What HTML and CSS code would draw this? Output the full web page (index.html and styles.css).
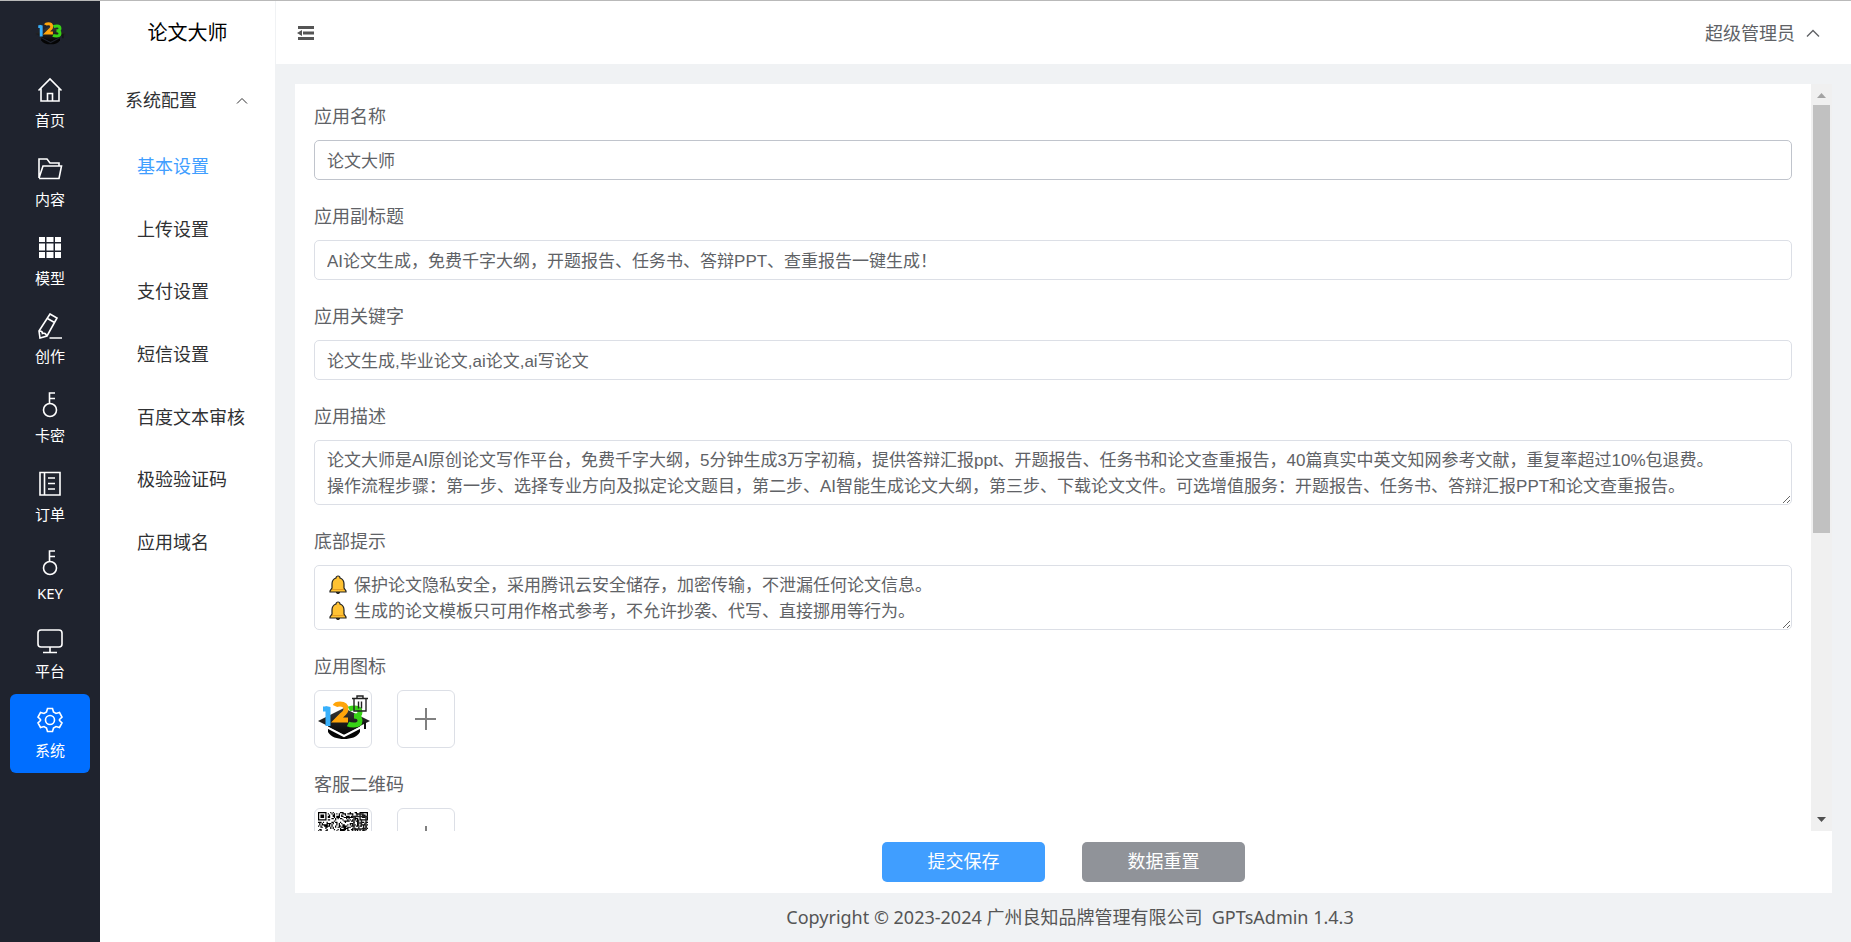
FILE: index.html
```html
<!DOCTYPE html>
<html lang="zh-CN">
<head>
<meta charset="utf-8">
<title>论文大师</title>
<link rel="stylesheet" href="styles.css">
</head>
<body>
<svg class="defs" aria-hidden="true">
  <defs>
    <linearGradient id="capFill" x1="0" y1="0" x2="0" y2="1"><stop offset="0" stop-color="#3a3a3a"/><stop offset="1" stop-color="#050505"/></linearGradient>
    <symbol id="cap" viewBox="0 0 54 46">
      <path class="cap-base" d="M12 27h32v9c-3 5-9 7-16 7s-13-2-16-7z"/>
      <path class="cap-edge" d="M3 27 28 40 53 27" />
      <path d="M28 12 54 25 28 38 2 25z" fill="url(#capFill)" stroke="none"/>
      <path d="M49 26v7" stroke="#111" stroke-width="2"/>
      <g fill="none" stroke-width="5">
        <path d="M7 13h2q2 0 3-2v19" stroke="#38b0fb"/>
        <path d="M19 10q1-2 5-2 6 0 6 5 0 3-4 6l-5 5h11" stroke="#ffa50a"/>
        <path d="M33 13q2-1 6-1 5 0 5 4t-6 4q6 0 6 4.500t-6 4.500q-4 0-6-1" stroke="#38d316"/>
      </g>
    </symbol>
    <symbol id="trash" viewBox="0 0 16 17"><path d="M0 3.500h16M5 3V1h6v2M2 4v12h12V4M6.500 6.500v7M9.500 6.500v7" fill="none" stroke="#222" stroke-width="1.400"/></symbol>
    <symbol id="plus" viewBox="0 0 22 22"><path d="M11 0v22M0 11h21" stroke="#808080" stroke-width="2"/></symbol>
    <symbol id="key" viewBox="0 0 26 26"><g fill="none" stroke="currentColor" stroke-width="1.600"><circle cx="13" cy="18" r="6.500"/><path d="M12.500 11.500V1H18M12.500 6.500H18"/></g></symbol>
    <symbol id="bell" viewBox="0 0 20 20"><path d="M10 1c1 0 2 1 2 2 3 1 4 3 4 6v4l2 3v1H2v-1l2-3V9c0-3 1-5 4-6 0-1 1-2 2-2z" fill="#ffc233" stroke="#222" stroke-width="1.200"/><path d="M8 17.500q2 2.500 4 0z" fill="#e08a1c" stroke="#222"/><path d="M4 14.500h12" stroke="#e39a20"/></symbol>
  </defs>
</svg>
<div class="app">
  <nav class="rail" aria-label="主导航">
    <svg class="rail-logo"><use href="#cap"/></svg>
    <div class="rail-list">
      <a class="rail-item" href="#"><svg viewBox="0 0 26 26"><path d="M1.500 13.500 13 2l11.500 11.500M4 11.500V24h18V11.500M10.500 24v-7.500h5V24"/></svg><span>首页</span></a>
      <a class="rail-item" href="#"><svg viewBox="0 0 26 26"><path d="M2 22V3h8l3 4h9v3M2 22 6 10h18.500L22 22.500H2"/></svg><span>内容</span></a>
      <a class="rail-item" href="#"><svg class="solid" viewBox="0 0 26 26"><path d="M2 2h6v5H2zM9.500 2h7v5h-7zM18 2h6v5h-6zM2 8.500h6v7H2zM9.500 8.500h7v7h-7zM18 8.500h6v7h-6zM2 17h6v6H2zM9.500 17h7v6h-7zM18 17h6v6h-6z"/></svg><span>模型</span></a>
      <a class="rail-item" href="#"><svg viewBox="0 0 26 26"><path d="M13 1l7 4-10 18-7 2-1-7zM10.500 5.500l7 4M2.500 18q3 0 3 2.500 3-1 4 2M12.500 25H25"/></svg><span>创作</span></a>
      <a class="rail-item" href="#"><svg><use href="#key"/></svg><span>卡密</span></a>
      <a class="rail-item" href="#"><svg viewBox="0 0 26 26"><path d="M3 1.500h20V24H3zM7.500 1.500V24M11 7h7M11 12.500h7M11 18h7"/></svg><span>订单</span></a>
      <a class="rail-item" href="#"><svg><use href="#key"/></svg><span>KEY</span></a>
      <a class="rail-item" href="#"><svg viewBox="0 0 26 26"><rect x="1" y="2" width="24" height="17" rx="3"/><path d="M13 19v5.500M6 24.500h14"/></svg><span>平台</span></a>
      <a class="rail-item active" href="#" aria-current="page"><svg viewBox="0 0 26 26"><path d="M10.500 1.500h5l1 3.500 2.500 1.500 3.500-1 2.500 4.500-2.500 2.500v1l2.500 2.500-2.500 4.500-3.500-1-2.500 1.500-1 3.500h-5l-1-3.500-2.500-1.500-3.500 1L1 16l2.500-2.500v-1L1 10l2.500-4.500 3.500 1L9.500 5z"/><circle cx="13" cy="13" r="4.500"/></svg><span>系统</span></a>
    </div>
  </nav>

  <aside class="side">
    <h1 class="side-title">论文大师</h1>
    <button class="side-group" type="button" aria-expanded="true"><span>系统配置</span><svg class="chev-small" viewBox="0 0 12 7"><path d="M1 6.500l5-5 5 5"/></svg></button>
    <div class="side-list">
      <a class="active" href="#">基本设置</a>
      <a href="#">上传设置</a>
      <a href="#">支付设置</a>
      <a href="#">短信设置</a>
      <a href="#">百度文本审核</a>
      <a href="#">极验验证码</a>
      <a href="#">应用域名</a>
    </div>
  </aside>

  <div class="main">
    <header class="top">
      <button class="fold" type="button" aria-label="收起菜单"><svg viewBox="0 0 18 16"><path d="M1 1h16v3H1zM6 6.500h11v3H6zM1 12h16v3H1zM0 8l5-3v6z"/></svg></button>
      <button class="user" type="button"><span>超级管理员</span><svg viewBox="0 0 14 8"><path d="M1 7.500l6-6 6 6"/></svg></button>
    </header>

    <main class="body">
      <form class="panel">
        <div class="scroll">
          <div class="fields">
            <div class="field"><label for="name">应用名称</label><input id="name" class="hover" type="text" value="论文大师"></div>
            <div class="field"><label for="sub">应用副标题</label><input id="sub" type="text" value="AI论文生成，免费千字大纲，开题报告、任务书、答辩PPT、查重报告一键生成！"></div>
            <div class="field"><label for="kw">应用关键字</label><input id="kw" type="text" value="论文生成,毕业论文,ai论文,ai写论文"></div>
            <div class="field"><label for="desc">应用描述</label><textarea id="desc" rows="2">论文大师是AI原创论文写作平台，免费千字大纲，5分钟生成3万字初稿，提供答辩汇报ppt、开题报告、任务书和论文查重报告，40篇真实中英文知网参考文献，重复率超过10%包退费。
操作流程步骤：第一步、选择专业方向及拟定论文题目，第二步、AI智能生成论文大纲，第三步、下载论文文件。可选增值服务：开题报告、任务书、答辩汇报PPT和论文查重报告。</textarea></div>
            <div class="field"><label for="tips">底部提示</label>
              <div class="tips"><textarea id="tips" rows="2">保护论文隐私安全，采用腾讯云安全储存，加密传输，不泄漏任何论文信息。
生成的论文模板只可用作格式参考，不允许抄袭、代写、直接挪用等行为。</textarea>
                <div class="bells"><svg><use href="#bell"/></svg><svg><use href="#bell"/></svg></div></div>
            </div>
            <div class="field"><span class="label">应用图标</span>
              <div class="tiles">
                <div class="tile"><svg class="cap"><use href="#cap"/></svg><button class="del" type="button" aria-label="删除"><svg><use href="#trash"/></svg></button></div>
                <button class="tile add" type="button" aria-label="添加"><svg><use href="#plus"/></svg></button>
              </div>
            </div>
            <div class="field"><span class="label">客服二维码</span>
              <div class="tiles">
                <div class="tile"><svg class="qr" id="qr" viewBox="0 0 41 41"></svg><button class="del" type="button" aria-label="删除"><svg><use href="#trash"/></svg></button></div>
                <button class="tile add" type="button" aria-label="添加"><svg><use href="#plus"/></svg></button>
              </div>
            </div>
          </div>
          <div class="bar" aria-hidden="true">
            <svg viewBox="0 0 9 5"><path d="M0 5 4.500 0 9 5z" fill="#a3a3a3"/></svg>
            <div class="track"><div class="thumb"></div></div>
            <svg viewBox="0 0 9 5"><path d="M0 0h9L4.500 5z" fill="#505050"/></svg>
          </div>
        </div>
        <div class="actions">
          <button class="btn primary" type="button">提交保存</button>
          <button class="btn" type="reset">数据重置</button>
        </div>
      </form>
    </main>
    <footer class="foot">Copyright © 2023-2024 广州良知品牌管理有限公司&nbsp; GPTsAdmin 1.4.3</footer>
  </div>
</div>
<script src="qr.js"></script>
</body>
</html>
```
FILE: styles.css
```css
* { box-sizing: border-box; }
body {
  margin: 0;
  font-family: "Noto Sans", "Noto Sans CJK SC", sans-serif;
  font-size: 18px;
  line-height: 26px;
  color: #606266;
}
a { color: inherit; text-decoration: none; }
button, input, textarea { font: inherit; color: inherit; }
button { padding: 0; border: 0; background: none; }
svg { display: block; fill: none; stroke: currentColor; }
.defs { position: absolute; width: 0; height: 0; }

.app { display: flex; height: 100vh; border-top: 1px solid #b9b9b9; background: #f0f2f4; overflow: hidden; }

.cap-base { fill: #050505; stroke: none; }
.cap-edge { fill: none; stroke: var(--cap-edge); stroke-width: 2; }

.rail { --cap-edge: #1f232e; flex: none; width: 100px; padding: 0 10px; background: #1f232e; color: #fff; }
.rail-logo { width: 34px; height: 27px; margin: 18px auto; }
.rail-list { display: grid; grid-auto-rows: 1fr; min-height: 709px; }
.rail-item { display: flex; flex-direction: column; align-items: center; gap: 5px; padding-top: 13px; border-radius: 6px; font-size: 15px; line-height: 24px; }
.rail-item.active { background: #006eff; }
.rail-item svg { width: 26px; height: 26px; stroke-width: 1.6; }
.rail-item .solid { fill: #fff; stroke: none; }

.side { flex: none; width: 176px; background: #fff; border-right: 1px solid #f0f2f4; color: #303133; }
.side-title { margin: 0; font-size: 20px; font-weight: 400; line-height: 64px; text-align: center; color: #000; }
.side-group { display: flex; align-items: center; justify-content: space-between; width: 100%; height: 70px; padding: 0 27px 0 25px; }
.chev-small { width: 12px; height: 7px; }
.side-list { display: grid; grid-auto-rows: 1fr; min-height: 438px; }
.side-list a { display: flex; align-items: center; padding-left: 37px; }
.side-list .active { color: #409eff; }

.main { flex: 1; min-width: 0; display: flex; flex-direction: column; }
.top { flex: none; height: 63px; display: flex; align-items: center; justify-content: space-between; padding: 0 31px 0 21px; background: #fff; }
.fold svg { width: 18px; height: 16px; fill: #555; stroke: none; }
.user { display: flex; align-items: center; gap: 11px; }
.user svg { width: 14px; height: 8px; stroke-width: 1.4; }

.body { flex: 1; min-height: 0; padding: 20px 19px 0; }
.panel { height: 100%; display: flex; flex-direction: column; background: #fff; }
.scroll { flex: 1; min-height: 0; display: flex; overflow: hidden; }
.fields { --cap-edge: #fff; flex: 1; min-width: 0; padding: 19px 19px; display: flex; flex-direction: column; gap: 23px; overflow: hidden; }
.field { flex: none; display: flex; flex-direction: column; gap: 11px; }
input, textarea { display: block; width: 100%; margin: 0; border: 1px solid #dcdfe6; border-radius: 5px; background: #fff; outline: 0; font-family: "Liberation Sans", "Noto Sans CJK SC", sans-serif; font-size: 17px; }
input { height: 40px; padding: 0 12px 2px; }
input.hover { border-color: #c0c4cc; }
textarea { height: 65px; padding: 7px 12px 4px; line-height: 26px; resize: vertical; overflow: hidden; }
.tips { position: relative; }
.tips textarea { padding-left: 39px; }
.bells { position: absolute; left: 14px; top: 10px; display: grid; gap: 6px; }
.bells svg { width: 20px; height: 20px; stroke: none; }

.tiles { display: flex; gap: 25px; }
.tile { position: relative; width: 58px; height: 58px; border: 1px solid #dcdfe6; border-radius: 6px; display: grid; place-items: center; }
.cap { width: 54px; height: 46px; }
.qr { width: 50px; height: 50px; fill: #000; stroke: none; }
.add svg { width: 22px; height: 22px; }
.del { position: absolute; right: 3px; top: 4px; }
.del svg { width: 16px; height: 17px; }

.bar { flex: none; width: 21px; padding: 9px 0; background: #f0f0f0; display: flex; flex-direction: column; align-items: center; gap: 7px; }
.bar svg { flex: none; width: 9px; height: 5px; stroke: none; }
.track { flex: 1; width: 17px; }
.thumb { height: 60.7%; background: #c1c1c1; }

.actions { flex: none; display: flex; justify-content: center; gap: 37px; padding: 11px 0; }
.btn { width: 163px; height: 40px; padding-bottom: 2px; border-radius: 5px; background: #909399; color: #fff; }
.btn.primary { background: #409eff; }
.foot { flex: none; height: 49px; padding-left: 13px; line-height: 49px; text-align: center; color: #555; }
```
FILE: qr.js
```js
// Draws the service QR code: three finder squares and a data field.
(function () {
  var size = 41, seed = 7, d = "";
  function finder(x, y, fx, fy) {
    var dx = Math.abs(x - fx), dy = Math.abs(y - fy), m = Math.max(dx, dy);
    return m > 4 ? -1 : (m === 3 || m < 2 ? 1 : 0);
  }
  for (var y = 0; y < size; y++) {
    for (var x = 0; x < size; x++) {
      seed = (seed * 1103515245 + 12345) % 2147483648;
      var on = ((seed >> 16) & 15) < 7 ? 1 : 0;
      [[3, 3], [37, 3], [3, 37]].forEach(function (f) {
        var v = finder(x, y, f[0], f[1]);
        if (v >= 0) on = v;
      });
      if (on) d += "M" + x + " " + y + "h1v1h-1z";
    }
  }
  var p = document.createElementNS("http://www.w3.org/2000/svg", "path");
  p.setAttribute("d", d);
  document.getElementById("qr").appendChild(p);
})();
```
